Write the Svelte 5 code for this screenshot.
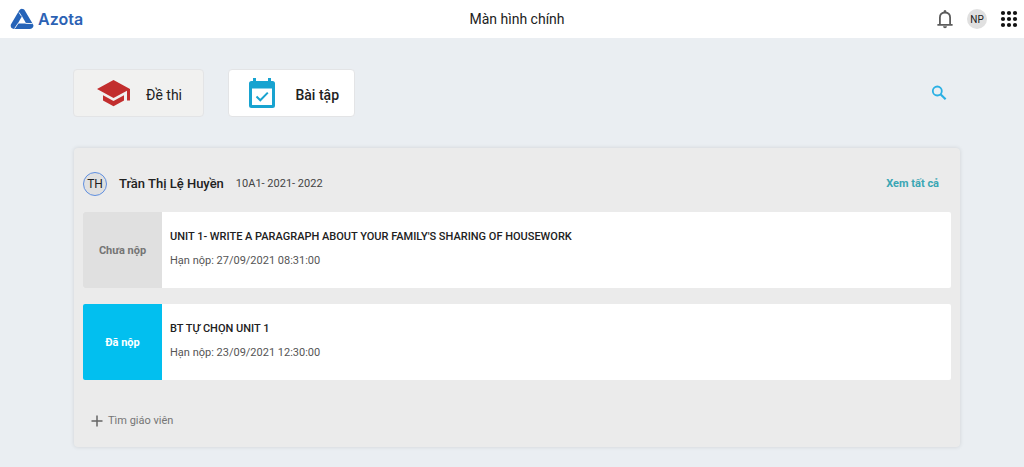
<script lang="ts">
    const assignments = [
        {
            title: "UNIT 1- WRITE A PARAGRAPH ABOUT YOUR FAMILY'S SHARING OF HOUSEWORK",
            deadline: '27/09/2021 08:31:00',
            submitted: false
        },
        {
            title: 'BT TỰ CHỌN UNIT 1',
            deadline: '23/09/2021 12:30:00',
            submitted: true
        }
    ];

    const dots = [4, 10, 16];

    let activeTab = $state('homework');
</script>

<header class="topbar">
    <a class="brand" href="/">
        <svg class="brand-logo" viewBox="0 0 24 22" aria-hidden="true">
            <path d="M12 4.2 20 17.6H4z" fill="none" stroke="#2563b8" stroke-width="6.6" stroke-linejoin="round" />
            <path d="M12 8.2 16.2 15.4H7.8z" fill="#fff" />
            <path d="M9 4.4 11.6 8.4M22.6 15.6 15.6 15.4M4.6 20.6 8.2 15.2" fill="none" stroke="#fff" stroke-width=".9" />
        </svg>
        <span class="brand-name">Azota</span>
    </a>
    <h1 class="page-title">Màn hình chính</h1>
    <div class="actions">
        <button class="icon-button" aria-label="Thông báo">
            <svg viewBox="0 0 20 20" width="20" height="20">
                <path d="M2.4 15.8H17.6M4.9 15.4V8.6C4.9 5.4 6.8 3.6 10 3.6S15.1 5.4 15.1 8.6V15.4" fill="none" stroke="#5c5c5c" stroke-width="1.8" />
                <path d="M8.6 3.6V1.9Q10 0 11.4 1.9V3.6zM8 17.2H12Q11.8 19.2 10 19.2T8 17.2z" fill="#5c5c5c" />
            </svg>
        </button>
        <button class="avatar user-avatar">NP</button>
        <button class="icon-button" aria-label="Ứng dụng">
            <svg viewBox="0 0 20 20" width="20" height="20">
                {#each dots as cy}
                    {#each dots as cx}
                        <circle {cx} {cy} r="2.1" fill="#111" />
                    {/each}
                {/each}
            </svg>
        </button>
    </div>
</header>

<main class="content">
    <div class="toolbar">
        <button class="tab" class:active={activeTab === 'exam'} onclick={() => (activeTab = 'exam')}>
            <svg viewBox="0 0 34 28" width="34" height="28" aria-hidden="true">
                <path d="M16.5 1 33 10V21.5H30V11.7L16.5 19 0 10z" fill="#c22e2e" />
                <path d="M6 16.2 16.5 22 27 16.2V21.4L16.5 27.2 6 21.4z" fill="#c22e2e" />
            </svg>
            <span>Đề thi</span>
        </button>
        <button class="tab" class:active={activeTab === 'homework'} onclick={() => (activeTab = 'homework')}>
            <svg viewBox="0 0 28 32" width="28" height="32" aria-hidden="true">
                <path d="M5 1H8V4H20V1H23V4H24.5Q27 4 27 6.5V28.5Q27 31 24.5 31H3.5Q1 31 1 28.5V6.5Q1 4 3.5 4H5zM4 11.5V28H24V11.5z" fill="#18a3d0" fill-rule="evenodd" />
                <path d="M8.5 19.5 12.3 23.3 19.8 15.6" fill="none" stroke="#18a3d0" stroke-width="2" />
            </svg>
            <span>Bài tập</span>
        </button>
        <button class="icon-button search" aria-label="Tìm kiếm">
            <svg viewBox="0 0 16 16" width="16" height="16">
                <circle cx="6.3" cy="6" r="4.5" fill="none" stroke="#2bb0e4" stroke-width="1.8" />
                <path d="M9.5 9.3 14.6 14.2" fill="none" stroke="#2bb0e4" stroke-width="2.2" />
            </svg>
        </button>
    </div>

    <section class="panel">
        <div class="panel-header">
            <span class="avatar teacher-avatar">TH</span>
            <h2 class="teacher">Trần Thị Lệ Huyền</h2>
            <span class="class-name">10A1- 2021- 2022</span>
            <a class="view-all" href="#all">Xem tất cả</a>
        </div>

        <div class="assignments">
            {#each assignments as item}
                <article class="assignment">
                    <div class="status" class:submitted={item.submitted}>
                        {item.submitted ? 'Đã nộp' : 'Chưa nộp'}
                    </div>
                    <div class="details">
                        <h3>{item.title}</h3>
                        <p>Hạn nộp: {item.deadline}</p>
                    </div>
                </article>
            {/each}
        </div>

        <button class="find-teacher">
            <svg viewBox="0 0 12 12" width="12" height="12" aria-hidden="true">
                <path d="M6 .5V11.5M.5 6H11.5" fill="none" stroke="#666" stroke-width="1.5" />
            </svg>
            Tìm giáo viên
        </button>
    </section>
</main>

<style>
    :global(body) {
        margin: 0;
        background: #eaeef2;
        color: #212121;
        font-family: Roboto, sans-serif;
    }

    button {
        padding: 0;
        border: 0;
        background: none;
        color: inherit;
        font-family: inherit;
        cursor: pointer;
    }

    a {
        text-decoration: none;
    }

    h1,
    h2,
    h3,
    p {
        margin: 0;
    }

    svg {
        display: block;
        flex: none;
    }

    .topbar {
        display: grid;
        grid-template-columns: 1fr auto 1fr;
        align-items: center;
        height: 38px;
        padding-left: 10px;
        background: #fff;
    }

    .brand {
        display: flex;
        align-items: center;
        gap: 4px;
        color: #2c62b4;
    }

    .brand-logo {
        width: 24px;
        height: 22px;
    }

    .brand-name {
        font-family: Inter, sans-serif;
        font-size: 16px;
        font-weight: 600;
        line-height: 20px;
    }

    .page-title {
        font-size: 14px;
        font-weight: 400;
        line-height: 20px;
    }

    .actions {
        display: flex;
        align-items: center;
        justify-content: flex-end;
        gap: 12px;
        padding-right: 5px;
    }

    .avatar {
        display: flex;
        align-items: center;
        justify-content: center;
        box-sizing: border-box;
        border-radius: 50%;
        background: #e0e0e0;
    }

    .user-avatar {
        width: 20px;
        height: 20px;
        font-size: 10px;
    }

    .content {
        padding: 31px 64px 18px 73px;
    }

    .toolbar {
        display: flex;
        align-items: center;
        gap: 24px;
    }

    .tab {
        display: flex;
        align-items: center;
        justify-content: space-between;
        box-sizing: border-box;
        width: 131px;
        height: 48px;
        padding: 0 21px 0 23px;
        border: 1px solid #e3e4e6;
        border-radius: 4px;
        background: #f1f1f0;
        font-size: 14px;
        line-height: 20px;
    }

    .tab.active {
        width: 127px;
        padding: 0 15px 0 19px;
        background: #fff;
        font-weight: 500;
    }

    .tab span {
        padding-top: 4px;
    }

    .search {
        margin-left: auto;
        margin-right: 13px;
    }

    .panel {
        margin: 31px 0 0 1px;
        padding: 24px 9px 18px;
        border-radius: 4px;
        background: #ebebeb;
        box-shadow: 0 0 4px rgba(0, 0, 0, 0.12);
    }

    .panel-header {
        display: flex;
        align-items: center;
        gap: 12px;
        padding-right: 12px;
        font-size: 11px;
        line-height: 16px;
    }

    .teacher-avatar {
        width: 24px;
        height: 24px;
        border: 1px solid #5f8fe0;
        font-size: 12px;
    }

    .teacher {
        font-size: 13px;
        font-weight: 500;
    }

    .class-name {
        color: #444;
    }

    .view-all {
        margin-left: auto;
        color: #3aa6b4;
        font-weight: 700;
    }

    .assignments {
        display: grid;
        gap: 16px;
        margin-top: 16px;
    }

    .assignment {
        display: flex;
        min-height: 76px;
        border-radius: 2px;
        background: #fff;
        overflow: hidden;
    }

    .status {
        display: flex;
        align-items: center;
        justify-content: center;
        flex: none;
        width: 79px;
        background: #e0e0e0;
        color: #757575;
        font-size: 11px;
        font-weight: 700;
    }

    .status.submitted {
        background: #02bfef;
        color: #fff;
    }

    .details {
        padding: 17px 8px 0;
        font-size: 11px;
        line-height: 16px;
    }

    .details h3 {
        font-size: 11px;
        font-weight: 500;
    }

    .details p {
        margin-top: 8px;
        color: #555;
    }

    .find-teacher {
        display: flex;
        align-items: center;
        gap: 5px;
        margin: 33px 0 0 8px;
        color: #757575;
        font-size: 11px;
        line-height: 16px;
    }
</style>
